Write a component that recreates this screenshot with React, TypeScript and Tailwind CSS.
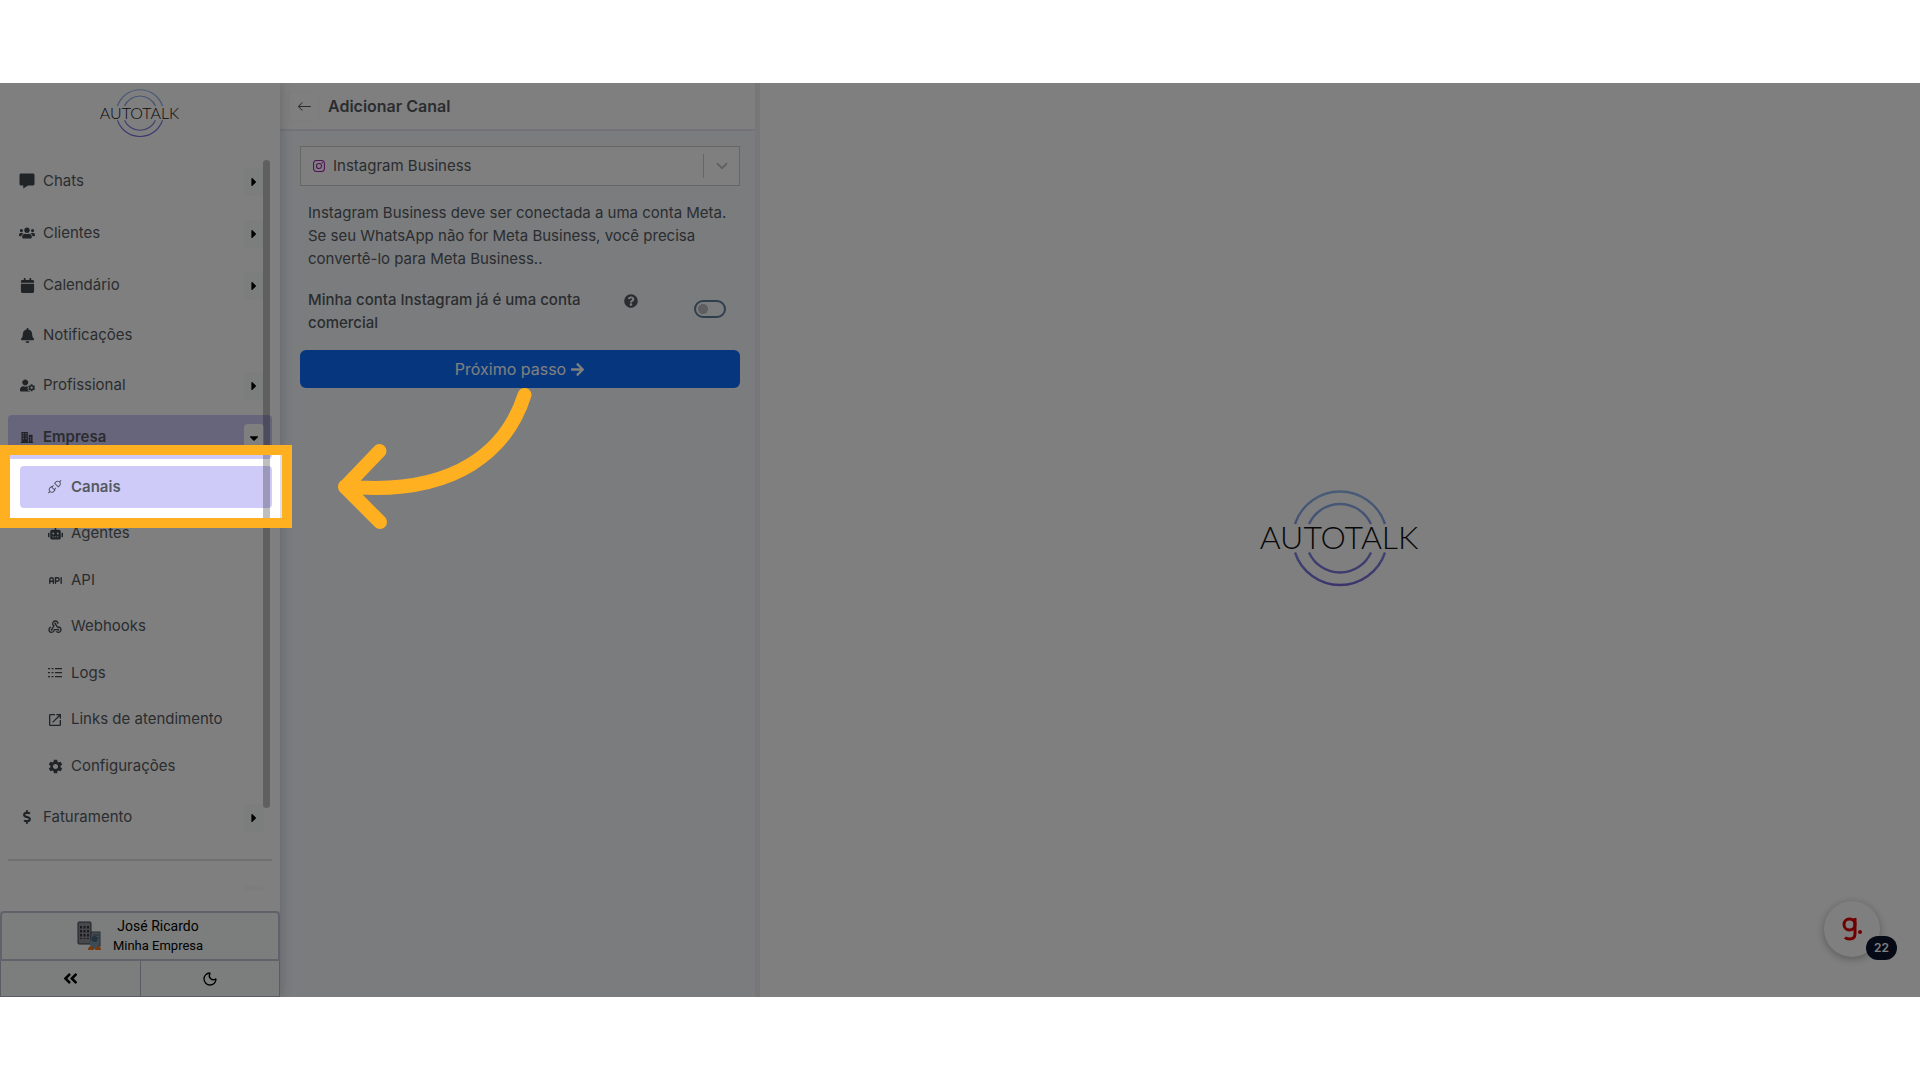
import type { ReactNode } from "react";
import { BiSolidMessage } from "react-icons/bi";
import { BsArrowLeft, BsInstagram } from "react-icons/bs";
import { FaAngleDoubleLeft, FaArrowRight, FaBell, FaCaretDown, FaCaretRight, FaDollarSign, FaQuestionCircle, FaRobot, FaUserCog, FaUsers } from "react-icons/fa";
import { FaCalendar } from "react-icons/fa6";
import { MdOpenInNew, MdSettings, MdWebhook } from "react-icons/md";
import { TbApi } from "react-icons/tb";
import { VscDebugDisconnect } from "react-icons/vsc";
import { ChevronDown, Moon } from "lucide-react";

type Item = {
  label: string;
  icon: ReactNode;
  expandable?: boolean;
  open?: boolean;
};

function CompanyIcon() {
  return (
    <svg viewBox="0 0 14 14" className="h-[13px] w-[14px]" fill="currentColor">
      <path
        fillRule="evenodd"
        d="M1 1h7v4h1V4h4v8h1v1H0v-1h1V1Zm1.500 1.500v1.300h1V2.500h-1Zm0 2.500v1.300h1V5h-1Zm0 2.500v1.300h1V7.500h-1Zm3-5v1.300h1V2.500h-1Zm0 2.500v1.300h1V5h-1Zm0 2.500v1.300h1V7.500h-1ZM8 5v7h.8V5H8Zm2.400 1.500v1.200h1V6.500h-1Zm0 2.500v1.200h1V9h-1Z"
      />
    </svg>
  );
}

function LogsIcon() {
  return (
    <svg viewBox="0 0 14 12" className="h-3 w-[14px]" fill="currentColor">
      <path d="M0 1h2v1.200H0ZM3.500 1h2v1.200h-2ZM7 1h7v1.200H7ZM0 5h2v1.200H0ZM3.500 5h2v1.200h-2ZM7 5h7v1.200H7ZM0 9h2v1.200H0ZM3.500 9h2v1.200h-2ZM7 9h7v1.200H7Z" />
    </svg>
  );
}

const mainItems: Item[] = [
  { label: "Chats", icon: <BiSolidMessage size={18} />, expandable: true },
  { label: "Clientes", icon: <FaUsers size={16} />, expandable: true },
  { label: "Calendário", icon: <FaCalendar size={15} />, expandable: true },
  { label: "Notificações", icon: <FaBell size={15} /> },
  { label: "Profissional", icon: <FaUserCog size={15} />, expandable: true },
  { label: "Empresa", icon: <CompanyIcon />, expandable: true, open: true },
];

const companyItems: Item[] = [
  { label: "Canais", icon: <VscDebugDisconnect size={16} />, open: true },
  { label: "Agentes", icon: <FaRobot size={15} /> },
  { label: "API", icon: <TbApi size={17} /> },
  { label: "Webhooks", icon: <MdWebhook size={16} /> },
  { label: "Logs", icon: <LogsIcon /> },
  { label: "Links de atendimento", icon: <MdOpenInNew size={16} /> },
  { label: "Configurações", icon: <MdSettings size={17} /> },
];

function NavRow({ item }: { item: Item }) {
  return (
    <li
      className={`flex items-center justify-between rounded pr-2 pl-[11px] ${item.expandable ? "h-11" : "h-10"} ${
        item.open ? "bg-[#cfcbf9] font-semibold" : ""
      }`}
    >
      <a href="#" className="flex items-center gap-2">
        <span className="flex w-4 justify-center text-[#43494f] *:shrink-0">{item.icon}</span>
        {item.label}
      </a>
      {item.expandable && (
        <button
          type="button"
          aria-label={`Expandir ${item.label}`}
          className={`mt-0.5 flex h-7 w-5 items-center justify-center rounded text-black ${
            item.open ? "bg-white" : "bg-[#f9fcfb]"
          }`}
        >
          {item.open ? <FaCaretDown size={14} /> : <FaCaretRight size={14} />}
        </button>
      )}
    </li>
  );
}

function SubRow({ item }: { item: Item }) {
  return (
    <li className={`flex h-[42px] items-center rounded pl-[27px] ${item.open ? "bg-[#cfcbf9] font-semibold" : ""}`}>
      <a href="#" className="flex items-center gap-2">
        <span className="flex w-4 justify-center text-[#43494f] *:shrink-0">{item.icon}</span>
        {item.label}
      </a>
    </li>
  );
}

function Logo({ className, id }: { className: string; id: string }) {
  return (
    <svg viewBox="0 2 160 100" className={className} role="img" aria-label="Autotalk">
      <defs>
        <linearGradient id={id} x1="0" y1="0" x2="0" y2="100" gradientUnits="userSpaceOnUse">
          <stop offset="0" stopColor="#94bcf0" />
          <stop offset="0.400" stopColor="#849ce4" />
          <stop offset="1" stopColor="#7668d8" />
        </linearGradient>
      </defs>
      <g fill="none" stroke={`url(#${id})`} strokeWidth="2.400">
        <path d="M35 36A47.400 47.400 0 0 1 125 36M35 64.500A47.400 47.400 0 0 0 125 64.500" />
        <path d="M49 36A34 34 0 0 1 111 36M49 64.500A34 34 0 0 0 111 64.500" />
      </g>
      <text x="79" y="61" textAnchor="middle" fill="#111111" className="font-['Lato'] text-[32px] font-light">
        AUTOTALK
      </text>
    </svg>
  );
}

function Avatar() {
  return (
    <svg viewBox="0 0 24 30" className="h-[30px] w-6" aria-hidden="true">
      <rect x="1" y="1" width="13" height="22" rx="1" fill="#8f8f99" stroke="#3f4350" />
      <path d="M4 5v13M7.500 5v13M11 5v13" stroke="#33363f" strokeWidth="2" strokeDasharray="2.500 1.500" />
      <rect x="14" y="11" width="9" height="14" fill="#98999f" stroke="#4d5766" />
      <path d="M16 14h6M16 17h6" stroke="#4f6d87" strokeWidth="1.500" />
      <path d="M14 17q3-5 7 0l1 5-2 6h-5l-2-6Z" fill="#7898ad" />
      <circle cx="17.500" cy="18" r="3" fill="#48677c" />
      <path d="M11 29q0-4 4-4l2 4ZM20 25q4 0 4 4h-6Z" fill="#f07020" />
    </svg>
  );
}

function Sidebar() {
  return (
    <aside className="relative z-10 flex w-[280px] shrink-0 flex-col bg-white shadow-[0_0_12px_rgba(40,40,90,0.25)]">
      <div className="flex h-[76px] justify-center pt-1.5">
        <Logo id="ring-small" className="h-[50px] w-20" />
      </div>
      <div className="relative px-2">
        <ul className="flex flex-col gap-2">
          {mainItems.map((item) => (
            <NavRow key={item.label} item={item} />
          ))}
        </ul>
        <ul className="mt-[7px] ml-3 flex h-[321px] flex-col justify-between">
          {companyItems.map((item) => (
            <SubRow key={item.label} item={item} />
          ))}
        </ul>
        <ul className="mt-2">
          <NavRow item={{ label: "Faturamento", icon: <FaDollarSign size={14} />, expandable: true }} />
        </ul>
        <hr className="mt-5 border-t-2 border-[#dfe1e4]" />
        <div className="mt-6 mr-2 ml-auto h-1.5 w-5 rounded-t bg-[#f9fcfb]" />
        <div className="absolute top-px right-[10px] h-[648px] w-[7px] rounded-full bg-black/25" />
      </div>
      <div className="mt-auto bg-[#f8fcfa] font-['Roboto',sans-serif] text-black">
        <button
          type="button"
          className="flex h-[50px] w-full items-center justify-center gap-3 rounded-t border-2 border-[#c0c5d3]"
        >
          <Avatar />
          <span className="flex flex-col">
            <span className="text-sm leading-5">José Ricardo</span>
            <span className="text-[13px] leading-5">Minha Empresa</span>
          </span>
        </button>
        <div className="flex h-9 divide-x divide-[#b4b9c6] border-x border-b border-[#b4b9c6]">
          <button type="button" aria-label="Recolher menu" className="flex flex-1 items-center justify-center">
            <FaAngleDoubleLeft size={17} />
          </button>
          <button type="button" aria-label="Modo escuro" className="flex flex-1 items-center justify-center">
            <Moon size={16} />
          </button>
        </div>
      </div>
    </aside>
  );
}

function ChannelPanel() {
  return (
    <main className="flex w-[480px] shrink-0 flex-col border-r-[5px] border-[#eeeff4] bg-[#f6f8fc]">
      <header className="flex h-12 items-center gap-2 border-b-2 border-[#e6e7ee] bg-white pl-2">
        <button
          type="button"
          aria-label="Voltar"
          className="flex h-[30px] w-8 items-center justify-center rounded border border-[#fafafa]"
        >
          <BsArrowLeft size={15} />
        </button>
        <h1 className="text-base font-semibold">Adicionar Canal</h1>
      </header>
      <form className="flex flex-col pt-[15px] pr-[15px] pl-5">
        <button
          type="button"
          aria-haspopup="listbox"
          className="flex h-10 items-center border border-[#cccccc] bg-white pl-3 text-left"
        >
          <BsInstagram size={12} className="text-[#a227b0]" />
          <span className="ml-2 flex-1">Instagram Business</span>
          <span className="flex h-6 w-9 items-center justify-center border-l border-[#cccccc] text-[#c4c4c4]">
            <ChevronDown size={18} strokeWidth={2.5} />
          </span>
        </button>
        <p className="mt-[15px] px-2 leading-[23px]">
          Instagram Business deve ser conectada a uma conta Meta. Se seu WhatsApp não for Meta Business, você
          precisa convertê-lo para Meta Business..
        </p>
        <div className="mt-[18px] flex px-2 leading-[23px] font-medium">
          <label htmlFor="business-account" className="w-[316px] pr-10">
            Minha conta Instagram já é uma conta comercial
          </label>
          <FaQuestionCircle size={14} className="mt-1.5" />
          <input
            id="business-account"
            type="checkbox"
            role="switch"
            className="mt-3 mr-1.5 ml-auto h-[18px] w-8 appearance-none rounded-full border-2 border-[#5d7c9b] bg-[radial-gradient(circle_at_7px_7px,#bdbdc0_5px,transparent_5px)]"
          />
        </div>
        <button
          type="button"
          className="mt-4 flex h-[38px] items-center justify-center gap-1 rounded-md bg-[#0d6efd] text-base text-white"
        >
          Próximo passo <FaArrowRight size={15} />
        </button>
      </form>
    </main>
  );
}

export default function App() {
  return (
    <div className="flex min-h-screen flex-col bg-white py-[83px] font-['Inter',sans-serif] text-[15px] text-[#555a60]">
      <div className="relative flex flex-1 overflow-hidden">
        <Sidebar />
        <ChannelPanel />
        <section className="relative flex flex-1 items-center justify-center bg-white">
          <Logo id="ring-large" className="h-[100px] w-40" />
          <div className="absolute right-10 bottom-10 flex size-14 items-center justify-center rounded-full bg-white shadow-[0_2px_8px_rgba(0,0,0,0.3)]">
            <svg viewBox="0 0 20 24" className="h-6 w-5" fill="none" stroke="#e00000" strokeWidth="3">
              <circle cx="7.500" cy="7.500" r="5.500" />
              <path d="M13 1v16q0 5-5.500 5-3 0-4.500-1.500" />
              <circle cx="18" cy="15" r="2" fill="#e00000" stroke="none" />
            </svg>
            <span className="absolute top-[35px] left-[42px] flex h-6 w-[31px] items-center justify-center rounded-full bg-[#0c142c] text-xs font-semibold text-white">
              22
            </span>
          </div>
        </section>

        {/* spotlight around "Canais", dims everything outside of it */}
        <div className="pointer-events-none absolute top-[372px] left-2.5 z-20 h-[63px] w-[272px] shadow-[0_0_0_10px_#ffb020,0_0_0_2400px_rgba(0,0,0,0.5)]" />
        <svg
          viewBox="0 0 200 146"
          className="pointer-events-none absolute top-[302px] left-[335px] z-20 h-[146px] w-[200px]"
          fill="none"
          stroke="#ffb020"
          strokeWidth="14"
          strokeLinecap="round"
          strokeLinejoin="round"
        >
          <path d="M189.500 10C173 62 124 112 10 101.500M44.500 66 10 102 45 137" />
        </svg>
      </div>
    </div>
  );
}
